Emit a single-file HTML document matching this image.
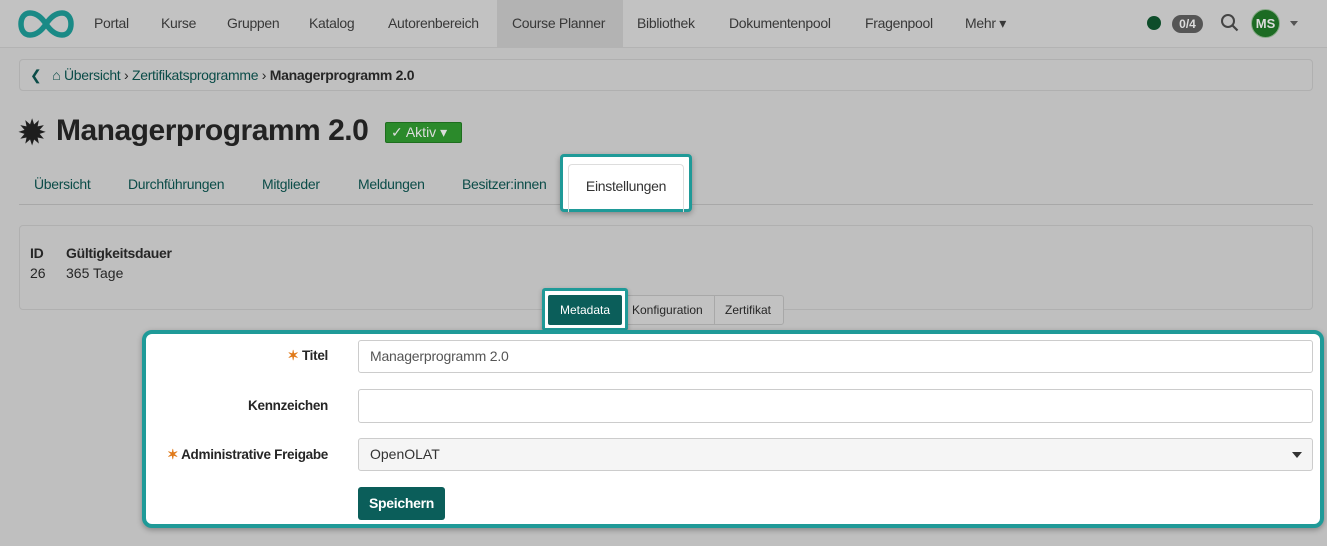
<!DOCTYPE html>
<html><head><meta charset="utf-8"><style>
*{box-sizing:border-box}
body{margin:0;width:1327px;height:546px;background:#bfbfbf;font-family:"Liberation Sans",sans-serif;font-size:14px;color:#262626;position:relative;overflow:hidden}
.nav{position:absolute;left:0;top:0;width:1327px;height:48px;background:#c2c2c2;border-bottom:1px solid #b3b3b3}
.nav span{position:absolute;top:15px;font-size:14px;letter-spacing:-0.3px;color:#383838;white-space:nowrap}
.abs{position:absolute;white-space:nowrap}
a{color:#0b4c48;text-decoration:none}
.t{top:176px;font-size:14px;color:#0b4c48;letter-spacing:-0.3px}
.lbl{font-weight:bold;font-size:13.5px;letter-spacing:-0.3px;text-align:right}
</style></head><body>
<div class="nav">
<svg class="abs" style="left:18px;top:9px" width="56" height="30" viewBox="0 0 56 30"><path d="M28 15C22 6 16 4 12 4 6 4 3 9 3 15s3 11 9 11c4 0 10-2 16-11s12-11 16-11c6 0 9 5 9 11s-3 11-9 11c-4 0-10-2-16-11z" fill="none" stroke="#1a8a86" stroke-width="5.5"/></svg>
<span style="left:94px">Portal</span><span style="left:161px">Kurse</span><span style="left:227px">Gruppen</span><span style="left:309px">Katalog</span><span style="left:388px">Autorenbereich</span>
<div class="abs" style="left:497px;top:0;width:126px;height:47px;background:#b3b3b3"></div>
<span style="left:512px">Course Planner</span><span style="left:637px">Bibliothek</span><span style="left:729px">Dokumentenpool</span><span style="left:865px">Fragenpool</span><span style="left:965px">Mehr ▾</span>
<div class="abs" style="left:1147px;top:16px;width:14px;height:14px;border-radius:50%;background:#0e4d2a"></div>
<div class="abs" style="left:1172px;top:15px;width:31px;height:18px;border-radius:9px;background:#555;color:#ddd;font-size:12px;font-weight:bold;text-align:center;line-height:18px">0/4</div>
<svg class="abs" style="left:1220px;top:13px" width="20" height="20"><circle cx="8" cy="8" r="6" fill="none" stroke="#444" stroke-width="2"/><path d="M12.5 12.5l5 5" stroke="#444" stroke-width="2.2"/></svg>
<div class="abs" style="left:1251px;top:9px;width:29px;height:29px;border-radius:50%;background:#1c6b23;border:1px solid #8a8;color:#ddd;font-size:13px;font-weight:bold;text-align:center;line-height:27px">MS</div>
<div class="abs" style="left:1290px;top:21px;border:4px solid transparent;border-top:5px solid #555"></div>
</div>
<div class="abs" style="left:19px;top:59px;width:1294px;height:32px;border:1px solid #b0b0b0;border-radius:4px;background:#c0c0c0;font-size:14px;letter-spacing:-0.3px;line-height:30px;padding-left:10px">
<span style="color:#0b4c48">❮</span>&nbsp;&nbsp;&nbsp;<span style="color:#0b4c48">⌂</span> <a>Übersicht</a> › <a>Zertifikatsprogramme</a> › <b>Managerprogramm 2.0</b></div>
<div class="abs" style="left:17px;top:113px;font-size:36px;line-height:40px;color:#1e1e1e">✹</div>
<div class="abs" style="left:56px;top:114px;font-size:30px;font-weight:bold;letter-spacing:-0.5px;color:#222">Managerprogramm 2.0</div>
<div class="abs" style="left:385px;top:122px;width:77px;height:21px;background:#2b8a2b;border:1px solid #1e6e1e;border-radius:2px;color:#ddd;font-size:14px;line-height:19px;padding-left:5px">✓ Aktiv ▾</div>
<div class="abs t" style="left:34px">Übersicht</div>
<div class="abs t" style="left:128px">Durchführungen</div>
<div class="abs t" style="left:262px">Mitglieder</div>
<div class="abs t" style="left:358px">Meldungen</div>
<div class="abs t" style="left:462px">Besitzer:innen</div>
<div class="abs" style="left:19px;top:204px;width:1294px;height:1px;background:#a8a8a8"></div>
<div class="abs" style="left:560px;top:154px;width:132px;height:58px;border:3px solid #1f9a98;border-radius:4px;background:#fff;box-shadow:0 2px 6px rgba(0,0,0,.3)"><div style="position:absolute;left:5px;top:7px;width:116px;height:48px;border:1px solid #ddd;border-bottom:none;border-radius:4px 4px 0 0;text-align:center;line-height:42px;color:#333;letter-spacing:-0.3px">Einstellungen</div></div>
<div class="abs" style="left:19px;top:225px;width:1294px;height:85px;border:1px solid #b0b0b0;border-radius:4px"></div>
<div class="abs" style="left:30px;top:245px;font-weight:bold;letter-spacing:-0.3px">ID</div><div class="abs" style="left:66px;top:245px;font-weight:bold;letter-spacing:-0.3px">Gültigkeitsdauer</div>
<div class="abs" style="left:30px;top:265px">26</div><div class="abs" style="left:66px;top:265px">365 Tage</div>
<div class="abs" style="left:623px;top:295px;width:161px;height:30px;border:1px solid #a8a8a8;border-radius:3px;background:#c2c2c2;font-size:12px;line-height:28px"><span style="position:absolute;left:8px">Konfiguration</span><span style="position:absolute;left:90px;top:0;height:28px;border-left:1px solid #a8a8a8;padding-left:10px">Zertifikat</span></div>
<div class="abs" style="left:542px;top:288px;width:86px;height:43px;border:3px solid #1f9a98;border-radius:3px;background:#fff;box-shadow:0 2px 5px rgba(0,0,0,.3)"><div style="position:absolute;left:3px;top:4px;width:74px;height:30px;background:#0b5e5a;border-radius:2px;color:#fff;font-size:12px;text-align:center;line-height:30px">Metadata</div></div>
<div class="abs" style="left:142px;top:330px;width:1182px;height:198px;border:4px solid #1f9a98;border-radius:10px;background:#fff;box-shadow:0 2px 6px rgba(0,0,0,.3)"></div>
<div class="abs lbl" style="left:150px;top:348px;width:178px"><span style="color:#e07a1a">✶</span> Titel</div>
<div class="abs lbl" style="left:150px;top:398px;width:178px">Kennzeichen</div>
<div class="abs lbl" style="left:150px;top:447px;width:178px"><span style="color:#e07a1a">✶</span> Administrative Freigabe</div>
<div class="abs" style="left:358px;top:340px;width:955px;height:33px;border:1px solid #ccc;border-radius:3px;padding-left:11px;line-height:31px;color:#555;letter-spacing:-0.2px">Managerprogramm 2.0</div>
<div class="abs" style="left:358px;top:389px;width:955px;height:34px;border:1px solid #ccc;border-radius:3px"></div>
<div class="abs" style="left:358px;top:438px;width:955px;height:33px;border:1px solid #ccc;border-radius:3px;background:#f5f5f5;padding-left:11px;line-height:31px;color:#333">OpenOLAT<span style="position:absolute;right:10px;top:13px;border:5px solid transparent;border-top:6px solid #333"></span></div>
<div class="abs" style="left:358px;top:487px;width:87px;height:33px;background:#0b5e5a;border-radius:3px;color:#fff;font-weight:bold;text-align:center;line-height:33px;letter-spacing:-0.3px">Speichern</div>
</body></html>
